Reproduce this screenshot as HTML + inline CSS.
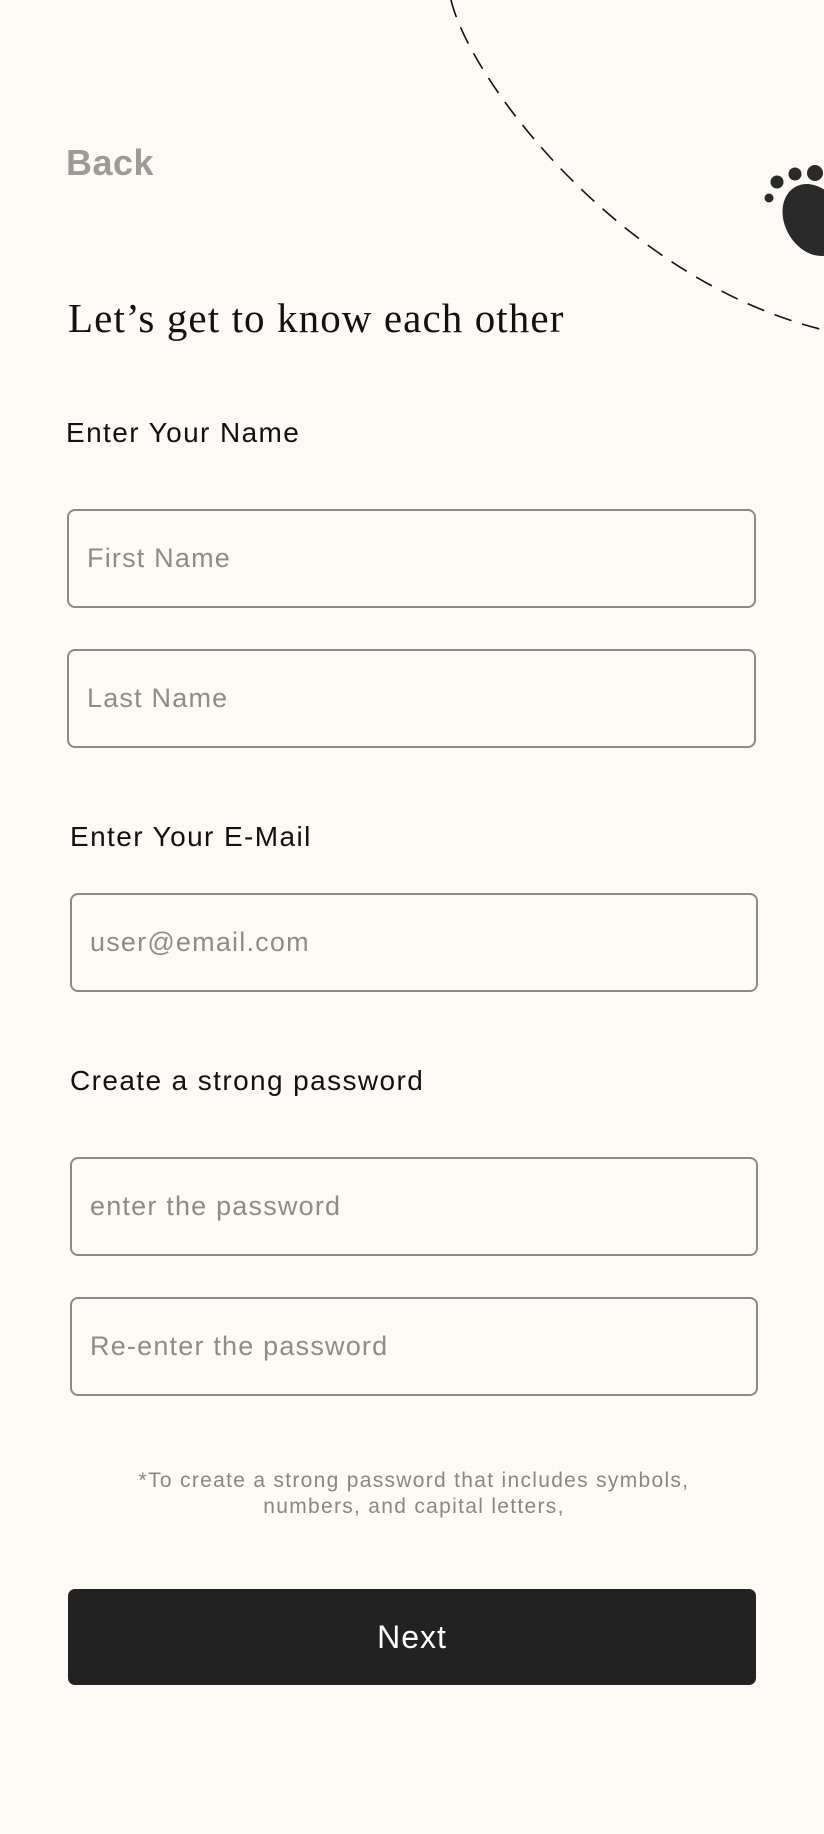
<!DOCTYPE html>
<html><head><meta charset="utf-8"><style>
html,body{margin:0;padding:0}
body{width:824px;height:1834px;background:#fdfaf5;position:relative;overflow:hidden;font-family:"Liberation Sans",sans-serif}
.a{position:absolute}
.lbl{position:absolute;font-size:28px;letter-spacing:1.4px;color:#111;white-space:nowrap}
.inp{position:absolute;box-sizing:border-box;border:2px solid #8c8987;border-radius:8px;font-size:27px;letter-spacing:1.2px;color:#8f8b86;padding-left:18px;display:flex;align-items:center}
</style></head><body>
<svg class="a" style="left:0;top:0" width="824" height="400">
<path d="M451,0 C470,80 620,280 824,330" fill="none" stroke="#111" stroke-width="1.6" stroke-dasharray="18 11"/>
<circle cx="769" cy="198" r="4.5" fill="#2a2a2a"/>
<circle cx="777" cy="182" r="6.5" fill="#2a2a2a"/>
<circle cx="795" cy="174" r="6.5" fill="#2a2a2a"/>
<circle cx="815" cy="173" r="8" fill="#2a2a2a"/>
<ellipse cx="814" cy="220" rx="29" ry="38" transform="rotate(-30 814 220)" fill="#2a2a2a"/>
</svg>
<div class="a" style="left:66px;top:142px;font-size:36px;font-weight:bold;color:#9e9a97;letter-spacing:0.5px">Back</div>
<div class="a" style="left:68px;top:294px;font-size:41px;letter-spacing:1.1px;font-family:'Liberation Serif',serif;color:#111;white-space:nowrap">Let’s get to know each other</div>
<div class="lbl" style="left:66px;top:417px">Enter Your Name</div>
<div class="inp" style="left:67px;top:509px;width:689px;height:99px">First Name</div>
<div class="inp" style="left:67px;top:649px;width:689px;height:99px">Last Name</div>
<div class="lbl" style="left:70px;top:821px">Enter Your E-Mail</div>
<div class="inp" style="left:70px;top:893px;width:688px;height:99px">user@email.com</div>
<div class="lbl" style="left:70px;top:1065px">Create a strong password</div>
<div class="inp" style="left:70px;top:1157px;width:688px;height:99px">enter the password</div>
<div class="inp" style="left:70px;top:1297px;width:688px;height:99px">Re-enter the password</div>
<div class="a" style="left:20px;width:788px;top:1468px;text-align:center;font-size:21px;letter-spacing:1.3px;line-height:26px;color:#8a8682">*To create a strong password that includes symbols,<br>numbers, and capital letters,</div>
<div class="a" style="left:68px;top:1589px;width:688px;height:96px;background:#222;border-radius:7px;color:#fff;font-size:32px;letter-spacing:1px;display:flex;align-items:center;justify-content:center">Next</div>
</body></html>
